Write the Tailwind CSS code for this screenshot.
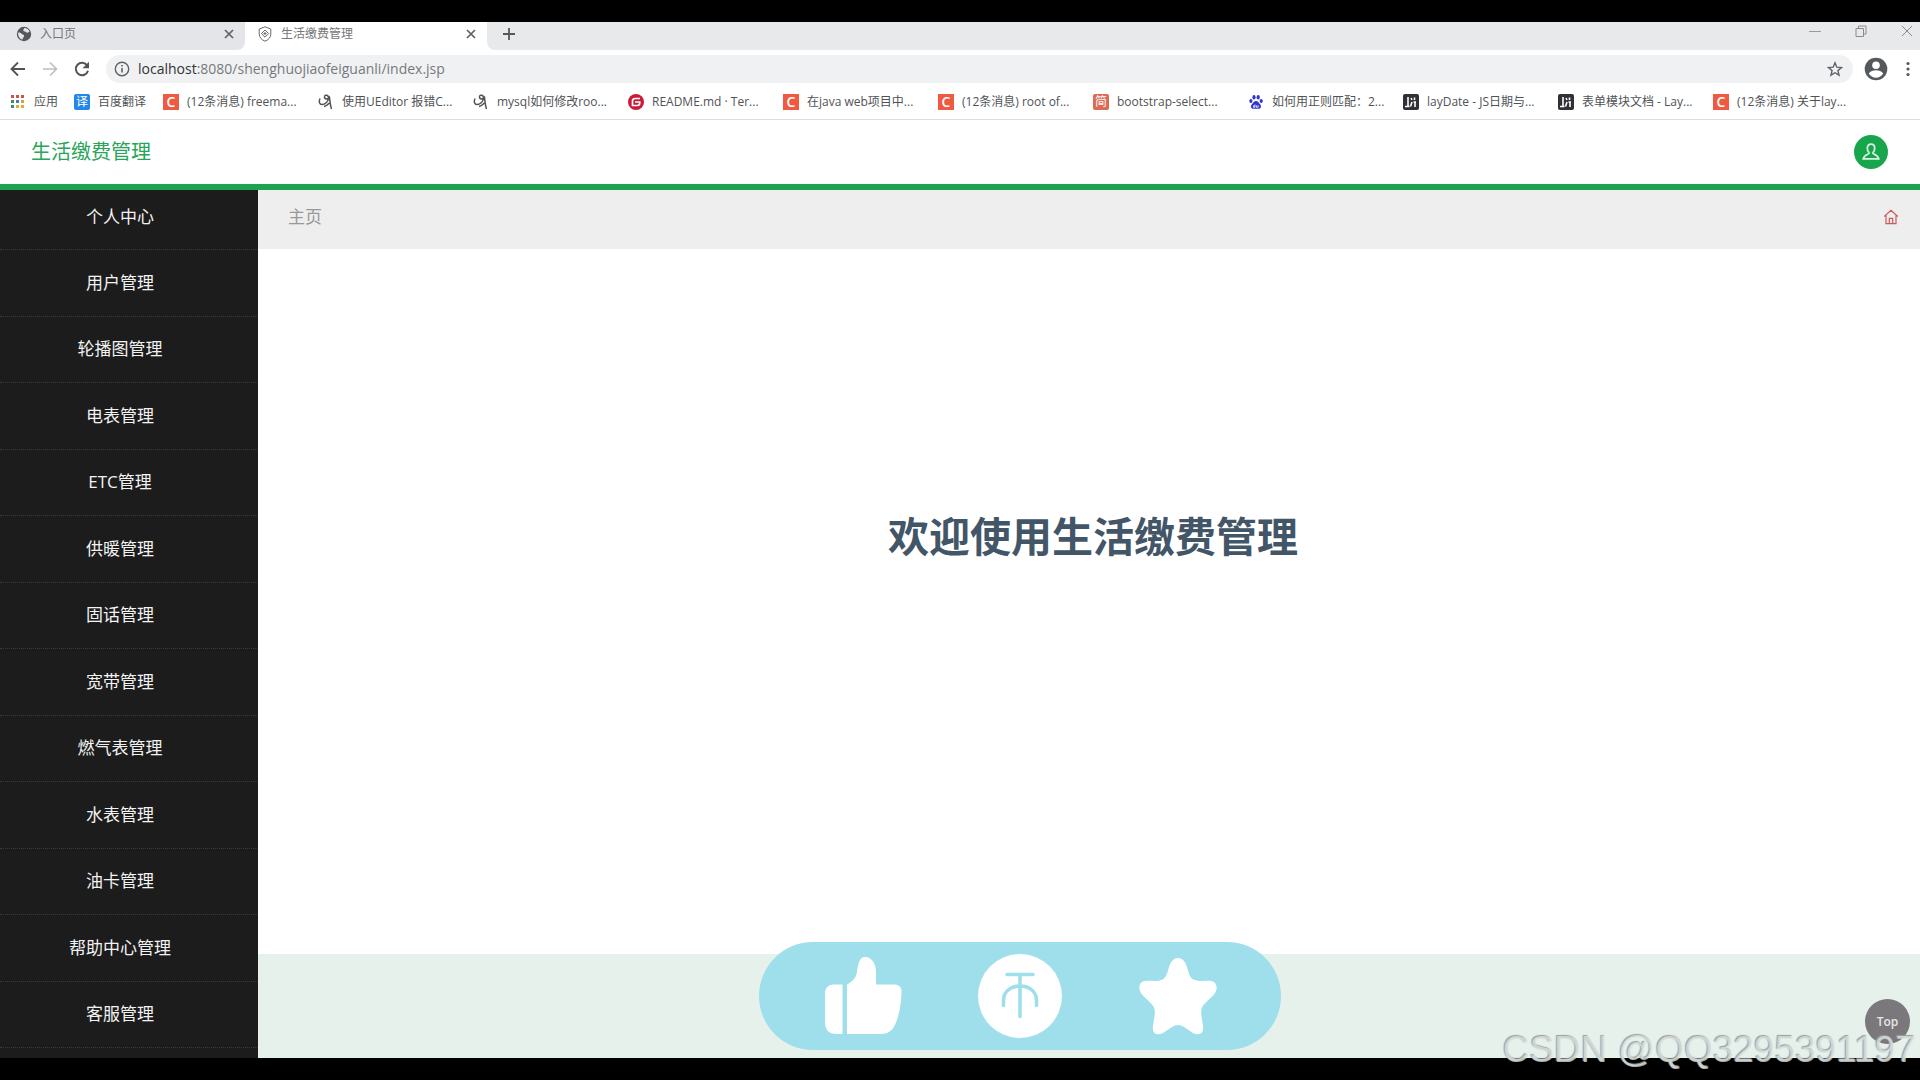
<!DOCTYPE html>
<html lang="zh-CN">
<head>
<meta charset="utf-8">
<title>生活缴费管理</title>
<script src="https://cdn.jsdelivr.net/npm/@tailwindcss/browser@4"></script>
</head>
<body class="relative flex min-h-screen flex-col overflow-x-hidden bg-black py-[22px] font-['Open_Sans','Noto_Sans_CJK_SC',sans-serif]">

<!-- Browser tabs -->
<div class="flex h-7 shrink-0 items-stretch bg-white text-xs text-[#74777b]">
  <div class="flex w-[245px] items-center rounded-br-lg bg-[#e4e5e8] pr-2 pb-1 pl-4">
    <svg class="size-4 shrink-0" viewBox="0 0 16 16"><circle cx="8" cy="8" r="7.2" fill="#54585d"/><path d="M2.200 6.500c1.600-.2 2.600.4 3.600 1.400 1 .9 2.400.6 2.300 2-.1 1.200-1.400 1.300-1.500 3.700C3.500 12.800 1.800 10 2.200 6.500zM8.200 2c2.500-.1 4.600 1.500 5.400 3.500-.9.200-1.300 1.300-2.300 1.300-1.100 0-.9-1.300-2.100-1.400-.9-.1-1.800 0-1.900-1 0-1 .8-1.200.9-2.400z" fill="#e4e5e8"/></svg>
    <span class="ml-2 flex-1">入口页</span>
    <button aria-label="关闭标签" class="grid size-4 place-items-center"><svg class="size-2.5" viewBox="0 0 10 10" stroke="#5f6368" stroke-width="1.700"><path d="M1 1l8 8M9 1l-8 8"/></svg></button>
  </div>
  <div class="flex w-[242px] items-center bg-white pr-2 pb-1 pl-3">
    <svg class="size-4 shrink-0" viewBox="0 0 16 16" fill="none" stroke="#666a6e"><path d="M8 .8l5.800 2.300v5c0 3.300-2.600 5.900-5.800 7.100C4.800 14 2.200 11.400 2.200 8.100v-5z"/><path d="M8 4l3.600 3.600L8 11.200 4.400 7.600z"/><path d="M8 6v3.200M6.400 7.600h3.200"/></svg>
    <span class="ml-2 flex-1">生活缴费管理</span>
    <button aria-label="关闭标签" class="grid size-4 place-items-center"><svg class="size-2.5" viewBox="0 0 10 10" stroke="#5f6368" stroke-width="1.700"><path d="M1 1l8 8M9 1l-8 8"/></svg></button>
  </div>
  <div class="flex flex-1 items-center rounded-bl-lg bg-[#e8e9eb] pb-1 pl-[14px]">
    <button aria-label="新标签" class="mr-auto grid size-4 place-items-center"><svg class="size-3" viewBox="0 0 12 12" stroke="#55595e" stroke-width="1.800"><path d="M6 0v12M0 6h12"/></svg></button>
    <div class="flex items-center gap-[34px] pr-[7px] pb-1.5">
      <button aria-label="最小化"><svg class="size-3" viewBox="0 0 12 12" stroke="#9b9b9b"><path d="M0 6.500h12"/></svg></button>
      <button aria-label="还原"><svg class="size-3" viewBox="0 0 12 12" fill="none" stroke="#8a8a8a"><path d="M1 3.500h7.500v8H1zM3.500 3.500v-2.500H11v8H8.500"/></svg></button>
      <button aria-label="关闭"><svg class="size-3" viewBox="0 0 12 12" stroke="#8a8a8a"><path d="M1 1l10 10M11 1L1 11"/></svg></button>
    </div>
  </div>
</div>

<!-- Address bar -->
<div class="flex h-9 shrink-0 items-center bg-white pt-1 pr-1 pb-0.5 pl-2.5">
  <button aria-label="后退" class="mr-4"><svg class="size-4" viewBox="0 0 16 16" fill="none" stroke="#505459" stroke-width="1.800"><path d="M15 8H2M8 1.500L1.500 8 8 14.500"/></svg></button>
  <button aria-label="前进" class="mr-4"><svg class="size-4" viewBox="0 0 16 16" fill="none" stroke="#bcbec1" stroke-width="1.600"><path d="M1 8h13M8 1.500L14.500 8 8 14.500"/></svg></button>
  <button aria-label="刷新" class="mr-4"><svg class="size-4" viewBox="0 0 16 16"><path d="M13.200 4.500A6.200 6.200 0 1 0 14 9.700" fill="none" stroke="#505459" stroke-width="2"/><path d="M15 .8v6.400H8.600z" fill="#505459"/></svg></button>
  <div class="flex h-7 flex-1 items-center rounded-full bg-[#f0f1f3] pr-2.5 pl-2">
    <svg class="size-4 shrink-0" viewBox="0 0 16 16"><circle cx="8" cy="8" r="6.700" fill="none" stroke="#5f6368" stroke-width="1.400"/><path d="M8 7v4.500M8 4v1.600" stroke="#5f6368" stroke-width="1.600"/></svg>
    <div class="ml-2 flex-1 text-sm leading-5 text-[#77797c]"><span class="text-[#333]">localhost</span>:8080/shenghuojiaofeiguanli/index.jsp</div>
    <button aria-label="收藏"><svg class="size-4" viewBox="0 0 16 16" fill="none" stroke="#5f6368" stroke-width="1.400"><path d="M8 1.800l1.800 4.400 4.700.4-3.600 3 1.200 4.600L8 11.700l-4.100 2.500 1.200-4.600-3.600-3 4.700-.4z"/></svg></button>
  </div>
  <button aria-label="账户" class="ml-[11px]"><svg class="size-6" viewBox="0 0 24 24"><circle cx="12" cy="12" r="11.300" fill="#55585c"/><circle cx="12" cy="8.300" r="3.800" fill="#fff"/><path d="M4.800 16.500c1.500-2.300 4.300-3.200 7.200-3.200s5.700.9 7.200 3.200c-1.500 2.500-4.200 4.200-7.200 4.200s-5.700-1.700-7.200-4.200z" fill="#fff"/></svg></button>
  <button aria-label="菜单" class="ml-3"><svg class="size-4" viewBox="0 0 16 16" fill="#55585c"><circle cx="8" cy="2.500" r="1.600"/><circle cx="8" cy="8" r="1.600"/><circle cx="8" cy="13.500" r="1.600"/></svg></button>
</div>

<!-- Bookmarks -->
<nav class="flex h-[34px] shrink-0 items-center overflow-hidden border-b border-[#dedede] bg-white pb-0.5 pl-2.5 text-xs whitespace-nowrap text-[#505356]">
  <a href="#" class="flex w-16 shrink-0 items-center gap-2"><svg class="size-4" viewBox="0 0 16 16"><g fill="#c9554a"><path d="M1 1h3v3H1zM6 1h3v3H6zM11 1h3v3h-3z"/></g><path d="M1 6h3v3H1z" fill="#3e8f5c"/><path d="M6 6h3v3H6z" fill="#4a78c8"/><path d="M11 6h3v3h-3z" fill="#d9a13a"/><path d="M1 11h3v3H1z" fill="#3e8f5c"/><path d="M6 11h3v3H6zM11 11h3v3h-3z" fill="#e0ac38"/></svg>应用</a>
  <a href="#" class="flex w-[89px] shrink-0 items-center gap-2"><span class="grid size-4 place-items-center rounded-xs bg-[#2287e6] text-xs leading-4 text-white">译</span>百度翻译</a>
  <a href="#" class="flex w-[155px] shrink-0 items-center gap-2"><span class="grid size-4 place-items-center bg-[#ee5b42] text-sm leading-4 font-semibold text-white">C</span>(12条消息) freema...</a>
  <a href="#" class="flex w-[155px] shrink-0 items-center gap-2"><svg class="size-4" viewBox="0 0 16 16" fill="none" stroke="#505356" stroke-width="1.500"><path d="M2 4.500C.5 8 1.500 10.500 4 10.500c3 0 6-2.500 6.500-6C11 1 6.500 0 6.500 3c0 2.500 3.500 2.500 5 .5.500 4 .5 7 2 11.500M6 12.500c2-.5 4-2 5.500-3.500"/></svg>使用UEditor 报错C...</a>
  <a href="#" class="flex w-[155px] shrink-0 items-center gap-2"><svg class="size-4" viewBox="0 0 16 16" fill="none" stroke="#505356" stroke-width="1.500"><path d="M2 4.500C.5 8 1.500 10.500 4 10.500c3 0 6-2.500 6.500-6C11 1 6.500 0 6.500 3c0 2.500 3.500 2.500 5 .5.500 4 .5 7 2 11.500M6 12.500c2-.5 4-2 5.500-3.500"/></svg>mysql如何修改roo...</a>
  <a href="#" class="flex w-[155px] shrink-0 items-center gap-2"><svg class="size-4" viewBox="0 0 16 16"><circle cx="8" cy="8" r="8" fill="#c71d39"/><path d="M12 4.500H7.200C5.500 4.500 4.500 5.500 4.500 7v4.500h5c1.300 0 2.200-.9 2.200-2.200V8H7" fill="none" stroke="#fff" stroke-width="1.700"/></svg>README.md · Ter...</a>
  <a href="#" class="flex w-[155px] shrink-0 items-center gap-2"><span class="grid size-4 place-items-center bg-[#ee5b42] text-sm leading-4 font-semibold text-white">C</span>在java web项目中...</a>
  <a href="#" class="flex w-[155px] shrink-0 items-center gap-2"><span class="grid size-4 place-items-center bg-[#ee5b42] text-sm leading-4 font-semibold text-white">C</span>(12条消息) root of...</a>
  <a href="#" class="flex w-[155px] shrink-0 items-center gap-2"><span class="grid size-4 place-items-center rounded-xs bg-[#dc6a55] text-xs leading-4 text-white">简</span>bootstrap-select...</a>
  <a href="#" class="flex w-[155px] shrink-0 items-center gap-2"><svg class="size-4" viewBox="0 0 16 16" fill="#2f36cf"><ellipse cx="2.900" cy="7" rx="1.600" ry="2.100"/><ellipse cx="6" cy="3.300" rx="1.600" ry="2.200"/><ellipse cx="10.200" cy="3.300" rx="1.600" ry="2.200"/><ellipse cx="13.200" cy="7" rx="1.600" ry="2.100"/><path d="M8 7c2 0 2.600 1.700 3.900 3 1.800 1.700 1.300 4.800-1.200 4.800H5.300c-2.500 0-3-3.100-1.200-4.800C5.400 8.700 6 7 8 7z"/><path d="M7 10.500v2.800H5.500v-1.500H7M8.500 11.300v2h1.700v-2" fill="none" stroke="#fff" stroke-width=".8"/></svg>如何用正则匹配：2...</a>
  <a href="#" class="flex w-[155px] shrink-0 items-center gap-2"><svg class="size-4" viewBox="0 0 16 16"><rect width="16" height="16" rx="2" fill="#303036"/><path d="M2 12.500h4.500M5 3v9.500M7.500 12.500L9 8M8 4l1 2M11.500 3.500V6M10.500 8H13M12 8v5" fill="none" stroke="#fff" stroke-width="1.600"/></svg>layDate - JS日期与...</a>
  <a href="#" class="flex w-[155px] shrink-0 items-center gap-2"><svg class="size-4" viewBox="0 0 16 16"><rect width="16" height="16" rx="2" fill="#303036"/><path d="M2 12.500h4.500M5 3v9.500M7.500 12.500L9 8M8 4l1 2M11.500 3.500V6M10.500 8H13M12 8v5" fill="none" stroke="#fff" stroke-width="1.600"/></svg>表单模块文档 - Lay...</a>
  <a href="#" class="flex w-[155px] shrink-0 items-center gap-2"><span class="grid size-4 place-items-center bg-[#ee5b42] text-sm leading-4 font-semibold text-white">C</span>(12条消息) 关于lay...</a>
</nav>

<!-- Site header -->
<header class="flex h-[70px] shrink-0 items-center justify-between border-b-[6px] border-[#1ba350] bg-white pr-8 pl-[31px]">
  <h1 class="text-xl leading-7 text-[#27a558]">生活缴费管理</h1>
  <button aria-label="个人账户" class="grid size-[34px] place-items-center rounded-full bg-[#18a64c]"><svg class="size-5" viewBox="0 0 20 20" fill="none" stroke="#d9f3e1" stroke-width="1.800"><path d="M8.300 10.800C7 9.800 6.300 8 6.300 6.200c0-2.300 1.400-4 3.700-4s3.700 1.700 3.700 4c0 1.800-.7 3.600-2 4.600M8.300 10.800c.3 1.500-5 1.500-6 6h15.400c-1-4.500-6.300-4.500-6-6"/></svg></button>
</header>

<div class="flex flex-1">
  <!-- Sidebar -->
  <nav class="flex w-[258px] shrink-0 flex-col bg-[#1c1c1c] pb-2.5 text-center text-[17px] leading-6 text-[#f2f2f2]">
    <a href="#" class="flex h-[60px] items-center justify-center border-b border-dotted border-[#3a3a3a] pr-[18px] pb-1.5">个人中心</a>
    <a href="#" class="flex flex-1 items-center justify-center border-b border-dotted border-[#3a3a3a] pr-[18px]">用户管理</a>
    <a href="#" class="flex flex-1 items-center justify-center border-b border-dotted border-[#3a3a3a] pr-[18px]">轮播图管理</a>
    <a href="#" class="flex flex-1 items-center justify-center border-b border-dotted border-[#3a3a3a] pr-[18px]">电表管理</a>
    <a href="#" class="flex flex-1 items-center justify-center border-b border-dotted border-[#3a3a3a] pr-[18px]">ETC管理</a>
    <a href="#" class="flex flex-1 items-center justify-center border-b border-dotted border-[#3a3a3a] pr-[18px]">供暖管理</a>
    <a href="#" class="flex flex-1 items-center justify-center border-b border-dotted border-[#3a3a3a] pr-[18px]">固话管理</a>
    <a href="#" class="flex flex-1 items-center justify-center border-b border-dotted border-[#3a3a3a] pr-[18px]">宽带管理</a>
    <a href="#" class="flex flex-1 items-center justify-center border-b border-dotted border-[#3a3a3a] pr-[18px]">燃气表管理</a>
    <a href="#" class="flex flex-1 items-center justify-center border-b border-dotted border-[#3a3a3a] pr-[18px]">水表管理</a>
    <a href="#" class="flex flex-1 items-center justify-center border-b border-dotted border-[#3a3a3a] pr-[18px]">油卡管理</a>
    <a href="#" class="flex flex-1 items-center justify-center border-b border-dotted border-[#3a3a3a] pr-[18px]">帮助中心管理</a>
    <a href="#" class="flex flex-1 items-center justify-center border-b border-dotted border-[#3a3a3a] pr-[18px]">客服管理</a>
  </nav>

  <main class="relative flex flex-1 flex-col bg-white">
    <div class="flex h-[59px] items-center justify-between bg-[#eee] pr-[21px] pb-1.5 pl-[30px]">
      <span class="text-[17px] leading-6 text-[#999]">主页</span>
      <a href="#" aria-label="主页"><svg class="size-4" viewBox="0 0 16 16" fill="none" stroke="#cb5a5a" stroke-width="1.200"><path d="M1.200 7.500L8 1.300l6.800 6.200M3 6.500v8.200h10V6.500M6.300 14.500V9.300h3.400v5.200"/></svg></a>
    </div>
    <div class="flex flex-1 items-center justify-center pb-[132px] pl-2">
      <h2 class="text-[41px] leading-[60px] font-bold text-[#435668]">欢迎使用生活缴费管理</h2>
    </div>
    <div class="h-[104px] bg-[#e7f1ec]"></div>
    <button class="absolute right-2.5 bottom-3.5 grid size-[45px] place-items-center rounded-full bg-[#7b787b] text-xs font-semibold text-[#e6e6e6]">Top</button>
  </main>
</div>

<!-- Floating like / coin / favourite bar -->
<div class="absolute bottom-[30px] left-1/2 ml-[60px] flex h-[108px] w-[522px] -translate-x-1/2 items-center justify-between rounded-full bg-[#9fdfec] px-16">
  <button aria-label="点赞"><svg class="size-20" viewBox="0 0 80 80" fill="#fff"><path d="M19.500 28.500V78H12Q2 77 2 67V36Q3 29 10 28.500zM24 28.500C29 26 33 22 34 16 35 9 36 1 42 1c7 0 11 7 11 15v12.500h18c5 0 8 3 7.500 8-.5 12-2 21-5.500 30-3 8-8 11.500-15 11.500H24z"/></svg></button>
  <button aria-label="投币"><svg class="size-[84px]" viewBox="0 0 84 84"><circle cx="42" cy="42" r="42" fill="#fff"/><path d="M29 20.500h26M42 21v41.500M25.500 51.500V46c0-8 7-14 16.500-14s16.500 6 16.500 14v5.500" fill="none" stroke="#9fdfec" stroke-width="3.600" stroke-linecap="round"/></svg></button>
  <button aria-label="收藏"><svg class="size-20" viewBox="0 0 80 80" fill="#fff"><path d="M41 2c4 0 7 3 9 9 2 7 3 12 8 13 5 2 11 0 16 1 6 1 7 7 4 12-4 6-12 10-13.500 16C63 60 67 68 66 74c-1 5-6 5-10 3-5-3-10-8-15-8s-10 5-15 8c-4 2-9 2-10-3-1-6 3-14 1.500-21C16 47 8 43 4 37 1 32 2 26 8 25c5-1 11 1 16-1 5-1 6-6 8-13 2-6 5-9 9-9z"/></svg></button>
</div>

<!-- Watermark -->
<div class="pointer-events-none absolute right-1 bottom-2.5 font-['Liberation_Sans',sans-serif] text-[37px] leading-10 whitespace-nowrap text-[#dfe5e2]/75 [text-shadow:-1px_-1px_1px_#9a9f9c]">CSDN @QQ3295391197</div>
</body>
</html>
